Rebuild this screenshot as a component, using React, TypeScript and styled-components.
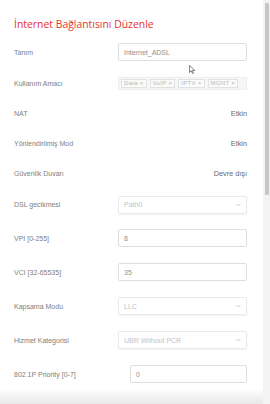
import React from "react";
import styled, { createGlobalStyle } from "styled-components";

const Global = createGlobalStyle`
  html, body { margin: 0; padding: 0; background: #fff; overflow: hidden; }
  body { width: 270px; height: 404px; font-family: "Liberation Sans", Arial, sans-serif; }
`;

const Screen = styled.div`
  position: relative;
  display: flex;
  width: 270px;
  height: 404px;
  background: #fff;
  overflow: hidden;
`;

const Main = styled.div`
  flex: 1;
  display: flex;
  flex-direction: column;
  padding: 0 16px 0 14px;
`;

const Title = styled.h1`
  margin: 0;
  padding-top: 17px;
  height: 19px;
  font-family: "Open Sans", sans-serif;
  font-weight: 400;
  font-size: 10.4px;
  line-height: 14px;
  color: #e8322f;
`;

const Row = styled.div<{ $h: number }>`
  display: flex;
  align-items: center;
  justify-content: space-between;
  height: ${(p) => p.$h}px;
`;

const Label = styled.span`
  font-size: 7px;
  color: #808080;
  white-space: nowrap;
`;

const Value = styled.span`
  font-size: 7.3px;
  color: #6a6a6a;
`;

const Input = styled.div<{ $w?: number }>`
  box-sizing: border-box;
  width: ${(p) => p.$w ?? 129}px;
  height: 18px;
  border: 1px solid #dedede;
  border-radius: 2px;
  display: flex;
  align-items: center;
  padding-left: 5px;
  font-size: 7px;
  color: #909090;
`;

const Select = styled.div`
  box-sizing: border-box;
  width: 129px;
  height: 18px;
  border: 1px solid #eaeaea;
  border-radius: 2px;
  box-shadow: 0 1px 2px rgba(0, 0, 0, 0.06);
  display: flex;
  align-items: center;
  justify-content: space-between;
  padding: 0 5px 0 5px;
  font-size: 7px;
  color: #c4c4c4;
`;

const Chevron = styled.svg`
  width: 5px;
  height: 4px;
`;

const TagBox = styled.div`
  box-sizing: border-box;
  width: 129px;
  height: 13px;
  background: #f6f6f6;
  border: 1px solid #eee;
  display: flex;
  align-items: center;
  gap: 3px;
  padding-left: 2px;
`;

const Tag = styled.span`
  box-sizing: border-box;
  height: 9px;
  padding: 0 2px;
  border: 1px solid #e2e2e2;
  background: #fafafa;
  font-size: 6px;
  line-height: 7px;
  letter-spacing: 0.3px;
  color: #b8b8b8;
  white-space: nowrap;
`;

const ScrollTrack = styled.div`
  width: 7px;
  height: 404px;
  background: #f3f3f3;
  display: flex;
  justify-content: center;
  padding-top: 3px;
  box-sizing: border-box;
`;

const ScrollThumb = styled.div`
  width: 4px;
  height: 192px;
  background: #c6c6c6;
  border-radius: 1px;
`;

const BottomShade = styled.div`
  position: absolute;
  left: 0;
  right: 7px;
  bottom: 0;
  height: 16px;
  background: linear-gradient(to bottom, rgba(0, 0, 0, 0), rgba(0, 0, 0, 0.09));
  pointer-events: none;
`;

const Cursor = styled.svg`
  position: absolute;
  left: 189px;
  top: 65px;
  width: 7px;
  height: 9px;
`;

const ChevronIcon = () => (
  <Chevron viewBox="0 0 5 4">
    <path d="M0.5 1 L2.5 3 L4.5 1" fill="none" stroke="#bbb" strokeWidth="0.8" />
  </Chevron>
);

export default function App() {
  return (
    <Screen>
      <Global />
      <Main>
        <Title>İnternet Bağlantısını Düzenle</Title>
        <Row $h={32}>
          <Label>Tanım</Label>
          <Input>Internet_ADSL</Input>
        </Row>
        <Row $h={30}>
          <Label>Kullanım Amacı</Label>
          <TagBox>
            <Tag>Data ×</Tag>
            <Tag>VoIP ×</Tag>
            <Tag>IPTV ×</Tag>
            <Tag>MGNT ×</Tag>
          </TagBox>
        </Row>
        <Row $h={30}>
          <Label>NAT</Label>
          <Value>Etkin</Value>
        </Row>
        <Row $h={30}>
          <Label>Yönlendirilmiş Mod</Label>
          <Value>Etkin</Value>
        </Row>
        <Row $h={30}>
          <Label>Güvenlik Duvarı</Label>
          <Value>Devre dışı</Value>
        </Row>
        <Row $h={33}>
          <Label>DSL gecikmesi</Label>
          <Select>
            Path0
            <ChevronIcon />
          </Select>
        </Row>
        <Row $h={34}>
          <Label>VPI [0-255]</Label>
          <Input>8</Input>
        </Row>
        <Row $h={34}>
          <Label>VCI [32-65535]</Label>
          <Input>35</Input>
        </Row>
        <Row $h={34}>
          <Label>Kapsama Modu</Label>
          <Select>
            LLC
            <ChevronIcon />
          </Select>
        </Row>
        <Row $h={34}>
          <Label>Hizmet Kategorisi</Label>
          <Select>
            UBR Without PCR
            <ChevronIcon />
          </Select>
        </Row>
        <Row $h={34}>
          <Label>802.1P Priority [0-7]</Label>
          <Input $w={117}>0</Input>
        </Row>
      </Main>
      <ScrollTrack>
        <ScrollThumb />
      </ScrollTrack>
      <BottomShade />
      <Cursor viewBox="0 0 7 9">
        <path d="M0.5 0.5 L0.5 7.5 L2.2 5.8 L3.6 8.6 L4.6 8.1 L3.3 5.4 L5.8 5.4 Z" fill="#fff" stroke="#333" strokeWidth="0.6" />
      </Cursor>
    </Screen>
  );
}
